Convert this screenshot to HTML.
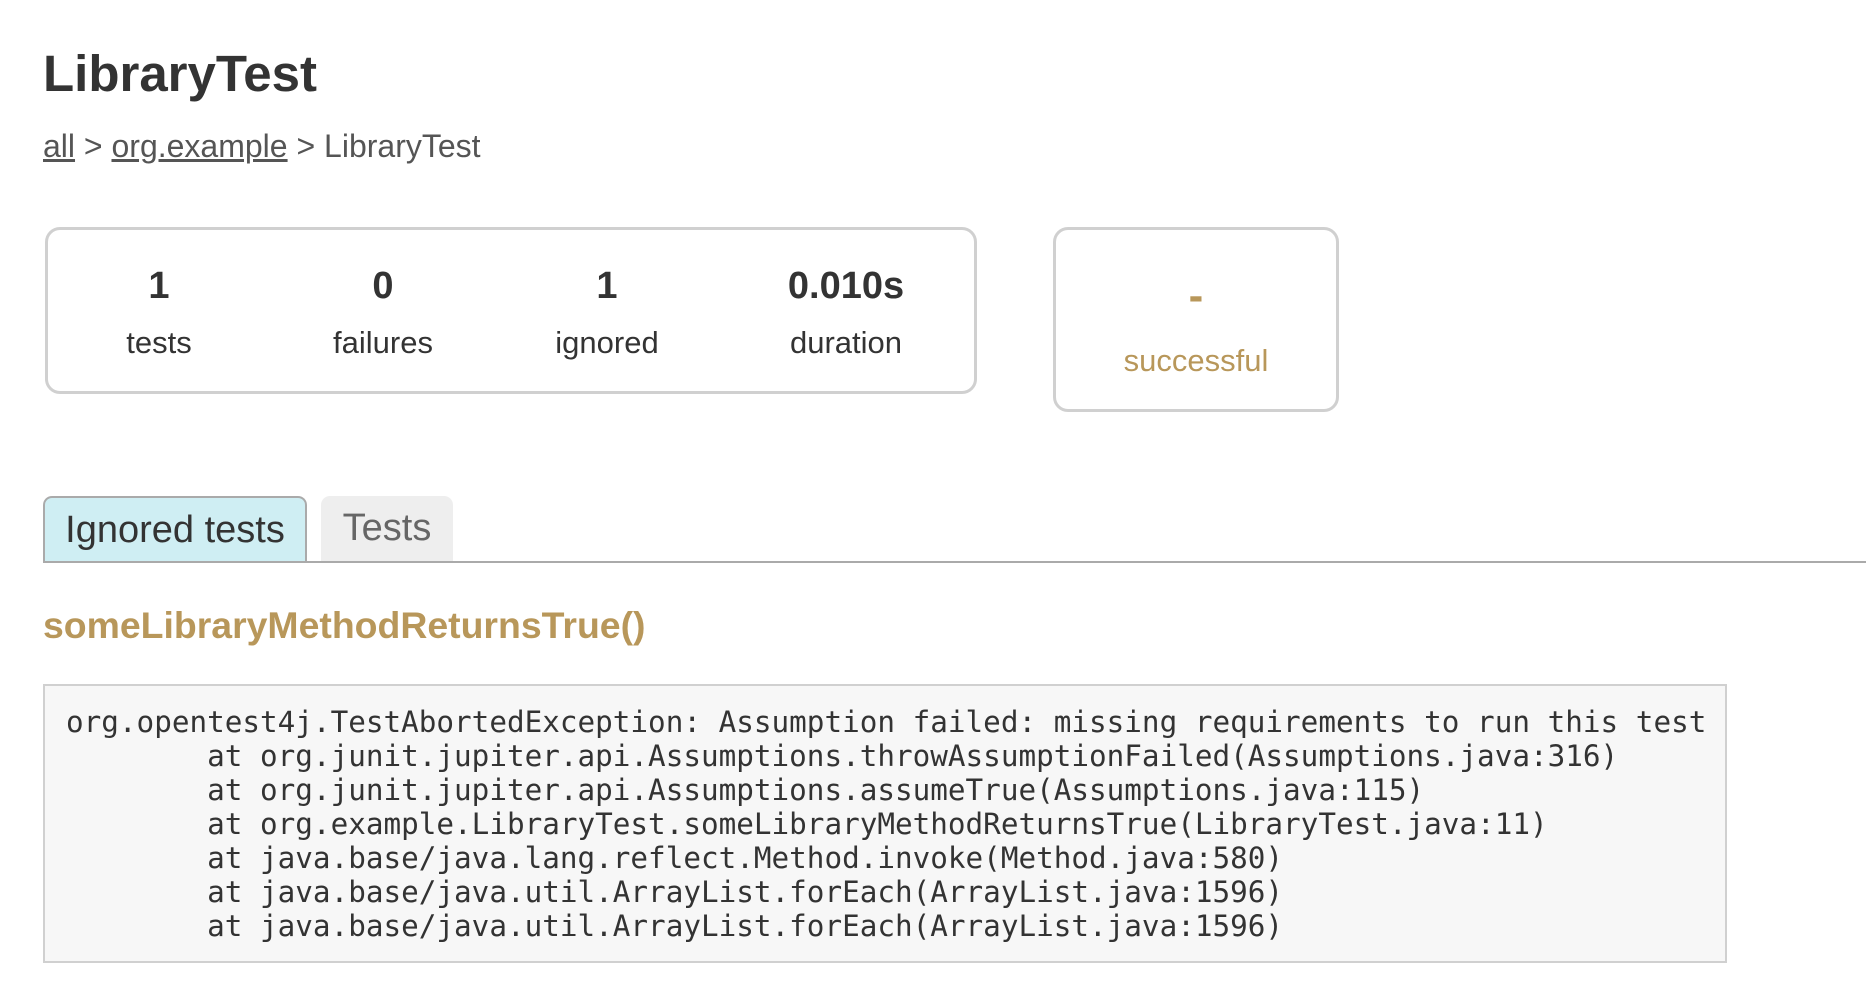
<!DOCTYPE html>
<html><head><meta charset="utf-8"><style>
html,body{margin:0;padding:0;background:#fff;width:1866px;height:1000px;overflow:hidden}
body{font-family:"Liberation Sans",Arial,sans-serif;color:#333;position:relative}
.a{position:absolute;white-space:nowrap}
h1{position:absolute;left:43px;top:44px;margin:0;font-size:51px;font-weight:bold;line-height:60px;color:#333}
.bc{left:43px;top:127px;font-size:32px;line-height:38px;color:#555}
.bc u{color:#555}
.box{position:absolute;border:3px solid #d0d0d0;border-radius:15px;box-sizing:border-box}
.num{font-size:38px;font-weight:bold;line-height:44px;text-align:center;transform:translateX(-50%)}
.lab{font-size:31px;line-height:38px;text-align:center;transform:translateX(-50%)}
.tab{position:absolute;top:496px;height:66px;box-sizing:border-box;font-size:38px;line-height:64px;text-align:center;border-radius:9px 9px 0 0}
pre{position:absolute;left:43px;top:684px;width:1684px;height:279px;box-sizing:border-box;margin:0;background:#f7f7f7;border:2px solid #d0d0d0;padding:19px 0 0 21px;font-family:"DejaVu Sans Mono","Liberation Mono",monospace;font-size:29.3px;line-height:34px;color:#333}
</style></head><body>
<h1>LibraryTest</h1>
<div class="a bc"><u>all</u> &gt; <u>org.example</u> &gt; LibraryTest</div>
<div class="box" style="left:45px;top:227px;width:932px;height:167px"></div>
<div class="a num" style="left:159px;top:264px">1</div>
<div class="a num" style="left:383px;top:264px">0</div>
<div class="a num" style="left:607px;top:264px">1</div>
<div class="a num" style="left:846px;top:264px">0.010s</div>
<div class="a lab" style="left:159px;top:324px">tests</div>
<div class="a lab" style="left:383px;top:324px">failures</div>
<div class="a lab" style="left:607px;top:324px">ignored</div>
<div class="a lab" style="left:846px;top:324px">duration</div>
<div class="box" style="left:1053px;top:227px;width:286px;height:185px"></div>
<div class="a num" style="left:1196px;top:274px;color:#b8975a;font-size:44px">-</div>
<div class="a lab" style="left:1196px;top:342px;color:#b8975a">successful</div>
<div class="tab" style="left:43px;width:264px;background:#cfeef3;border:2px solid #aaa;border-bottom:none;color:#333">Ignored tests</div>
<div class="tab" style="left:321px;width:132px;background:#eee;color:#666">Tests</div>
<div class="a" style="left:43px;top:561px;width:1823px;height:2px;background:#aaa"></div>
<div class="a" style="left:43px;top:602px;font-size:37.4px;font-weight:bold;line-height:46px;color:#b8975a">someLibraryMethodReturnsTrue()</div>
<pre>org.opentest4j.TestAbortedException: Assumption failed: missing requirements to run this test
        at org.junit.jupiter.api.Assumptions.throwAssumptionFailed(Assumptions.java:316)
        at org.junit.jupiter.api.Assumptions.assumeTrue(Assumptions.java:115)
        at org.example.LibraryTest.someLibraryMethodReturnsTrue(LibraryTest.java:11)
        at java.base/java.lang.reflect.Method.invoke(Method.java:580)
        at java.base/java.util.ArrayList.forEach(ArrayList.java:1596)
        at java.base/java.util.ArrayList.forEach(ArrayList.java:1596)</pre>
</body></html>
